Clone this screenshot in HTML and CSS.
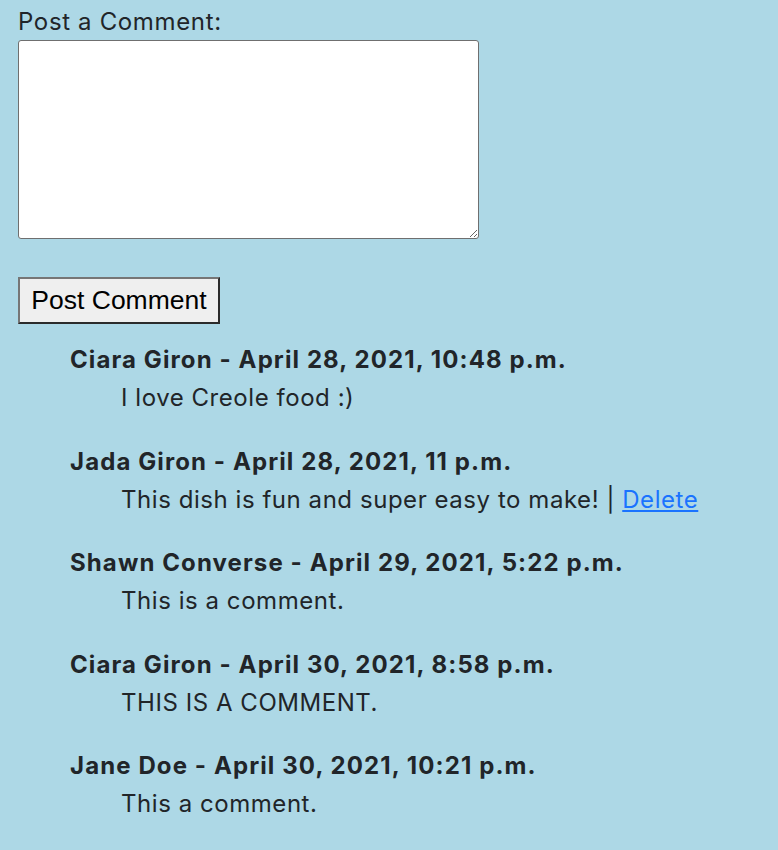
FILE: index.html
```html
<!DOCTYPE html>
<html>
<head>
<meta charset="utf-8">
<link rel="stylesheet" href="styles.css">
</head>
<body>
<form class="comment-form">
  <label class="form-label" for="c">Post a Comment:</label>
  <textarea id="c" class="comment-box"></textarea>
  <button type="button" class="post-btn">Post Comment</button>
</form>
<div class="comments">
  <div class="comment">
    <div class="comment-head">Ciara Giron - April 28, 2021, 10:48 p.m.</div>
    <div class="comment-body">I love Creole food :)</div>
  </div>
  <div class="comment">
    <div class="comment-head">Jada Giron - April 28, 2021, 11 p.m.</div>
    <div class="comment-body">This dish is fun and super easy to make! | <a href="#" class="delete">Delete</a></div>
  </div>
  <div class="comment">
    <div class="comment-head">Shawn Converse - April 29, 2021, 5:22 p.m.</div>
    <div class="comment-body">This is a comment.</div>
  </div>
  <div class="comment">
    <div class="comment-head">Ciara Giron - April 30, 2021, 8:58 p.m.</div>
    <div class="comment-body">THIS IS A COMMENT.</div>
  </div>
  <div class="comment">
    <div class="comment-head">Jane Doe - April 30, 2021, 10:21 p.m.</div>
    <div class="comment-body">This a comment.</div>
  </div>
</div>
</body>
</html>
```

FILE: styles.css
```css
html, body {
  margin: 0;
  padding: 0;
  background: #add8e6;
}
body {
  font-family: Inter, "Liberation Sans", Arial, sans-serif;
  font-size: 24px;
  color: #212529;
  letter-spacing: 0.55px;
  padding: 7px 18px 0 18px;
}
.comment-form {
  display: flex;
  flex-direction: column;
  align-items: flex-start;
}
.form-label {
  line-height: 30px;
  display: block;
  letter-spacing: 0.65px;
}
.comment-box {
  margin-top: 3px;
  width: 461px;
  height: 199px;
  box-sizing: border-box;
  border: 1.5px solid #6f6f6f;
  border-radius: 3px;
  background: #fff;
  resize: both;
}
.post-btn {
  margin-top: 38px;
  width: 202px;
  height: 47px;
  box-sizing: border-box;
  background: #efefef;
  border: 2px solid #767676;
  border-right-color: #2b2b2b;
  border-bottom-color: #2b2b2b;
  border-radius: 0;
  font-family: "Liberation Sans", Arial, sans-serif;
  font-size: 26.5px;
  letter-spacing: 0;
  color: #000;
  padding: 0;
}
.comments {
  padding-left: 52px;
  margin-top: 17px;
}
.comment {
  margin-bottom: 25.5px;
}
.comment-head {
  font-weight: 700;
  line-height: 38px;
  letter-spacing: 1.1px;
}
.comment-body {
  padding-left: 51px;
  line-height: 38px;
}
.delete {
  color: #1a73ff;
  text-decoration: underline;
}
```
